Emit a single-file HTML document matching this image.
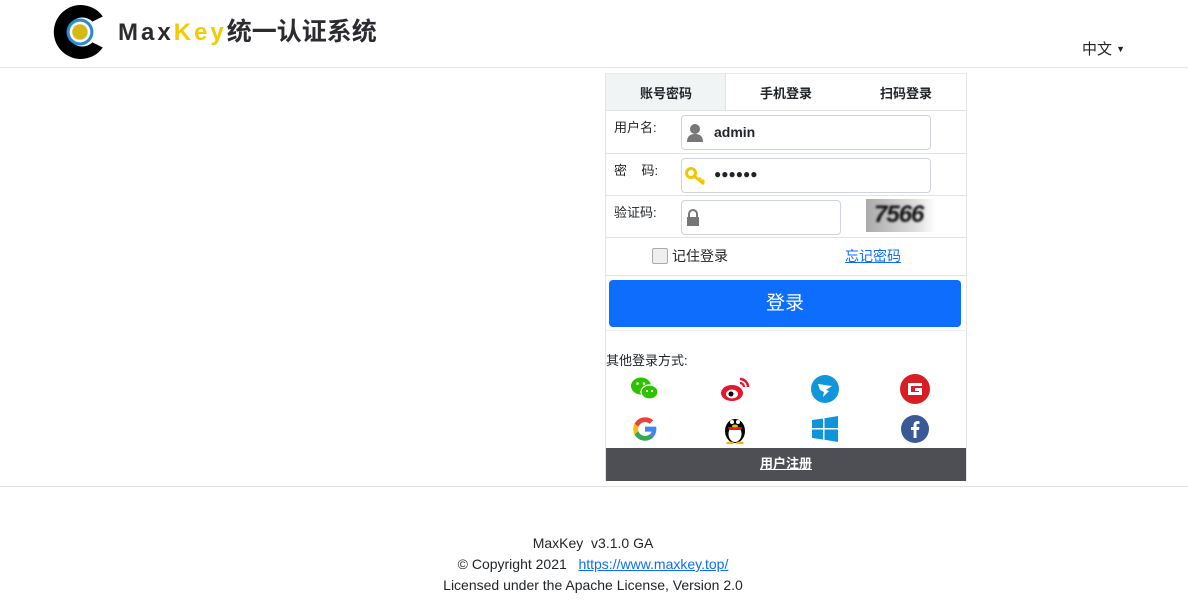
<!DOCTYPE html>
<html><head><meta charset="utf-8"><style>
*{margin:0;padding:0;box-sizing:border-box}
body{width:1188px;height:611px;background:#fff;font-family:"Liberation Sans","Noto Sans CJK SC",sans-serif;color:#212529;position:relative;overflow:hidden;font-size:14px}
.abs{position:absolute}
.hl{position:absolute;left:0;width:1188px;height:1px;background:#e2e2e2}
.panel{position:absolute;left:605px;top:73px;width:362px;height:408px;border:1px solid #e5e5e5;border-top:1px solid #e8e8e8}
.row{position:absolute;left:0;width:360px;border-top:1px solid #e3e3e3}
.lbl{position:absolute;left:8px;font-size:13px}
.inp{position:absolute;left:75px;height:35px;border:1px solid #ced4da;border-radius:4px;background:#fff}
.ic{position:absolute;width:30px;height:30px;display:flex;align-items:center;justify-content:center}
</style></head><body>
<svg class="abs" style="left:53px;top:4px" width="56" height="56" viewBox="0 0 54 54">
<path d="M48 12 A26 26 0 1 0 48 42 L38 37 A14 14 0 1 1 38 17 Z" fill="#000"/>
<circle cx="26" cy="27" r="13" fill="#2a8bd0"/>
<circle cx="26" cy="27" r="10" fill="#fff"/>
<circle cx="26" cy="27" r="7.5" fill="#d6b818"/>
</svg>
<div class="abs" style="left:118px;top:17px;font-size:24px;font-weight:bold;letter-spacing:3px;line-height:30px"><span style="color:#2b2b30">Max</span><span style="color:#f4cb00">Key</span><span style="color:#2b2b30;letter-spacing:0;font-size:25px">统一认证系统</span></div>
<div class="abs" style="left:1082px;top:38px;font-size:15px">中文 <span style="font-size:9px;vertical-align:2px">▼</span></div>
<div class="hl" style="top:67px"></div>
<div class="panel">
 <div class="abs" style="left:0;top:0;width:120px;height:37px;background:#f1f4f5;border-right:1px solid #e3e3e3"></div>
 <div class="abs" style="left:0;top:9px;width:120px;text-align:center;font-size:13px;font-weight:bold">账号密码</div>
 <div class="abs" style="left:120px;top:9px;width:120px;text-align:center;font-size:13px;font-weight:bold">手机登录</div>
 <div class="abs" style="left:240px;top:9px;width:120px;text-align:center;font-size:13px;font-weight:bold">扫码登录</div>
 <div class="row" style="top:36px;height:43px"><span class="lbl" style="top:6px">用户名:</span>
  <div class="inp" style="top:4px;width:250px"><svg class="abs" style="left:4px;top:7px" width="18" height="20" viewBox="0 0 18 20"><circle cx="9" cy="6" r="5" fill="#777"/><path d="M1 19 Q1 11 9 11 Q17 11 17 19Z" fill="#777"/></svg><span class="abs" style="left:32px;top:8px;font-weight:bold;font-size:14px">admin</span></div></div>
 <div class="row" style="top:79px;height:43px"><span class="lbl" style="top:6px">密&nbsp;&nbsp;&nbsp;&nbsp;码:</span>
  <div class="inp" style="top:4px;width:250px"><svg class="abs" style="left:3px;top:7px" width="22" height="20" viewBox="0 0 22 20"><circle cx="6" cy="7" r="4.5" fill="none" stroke="#f2c500" stroke-width="3"/><path d="M9 10 L19 18 M14 14 L16 12 M17 16 L19 14" stroke="#f2c500" stroke-width="3"/></svg><span class="abs" style="left:32px;top:8px;font-weight:bold;font-size:12px;letter-spacing:0">●●●●●●</span></div></div>
 <div class="row" style="top:121px;height:43px"><span class="lbl" style="top:6px">验证码:</span>
  <div class="inp" style="top:4px;width:160px"><svg class="abs" style="left:4px;top:8px" width="14" height="18" viewBox="0 0 14 18"><path d="M3 8 V5 A4 4 0 0 1 11 5 V8" fill="none" stroke="#777" stroke-width="2"/><rect x="1" y="8" width="12" height="9" fill="#777"/></svg></div>
  <div class="abs" style="left:260px;top:3px;width:70px;height:33px;background:linear-gradient(90deg,#aaa,#ddd 70%,#fff);overflow:hidden"><span class="abs" style="left:8px;top:2px;font-family:'Liberation Sans',sans-serif;font-style:italic;font-weight:bold;font-size:24px;color:#111;letter-spacing:-1px;filter:blur(1px)">7566</span></div></div>
 <div class="row" style="top:163px;height:39px">
  <div class="abs" style="left:46px;top:10px;width:16px;height:16px;border:1px solid #aaa;border-radius:2px;background:#eee"></div>
  <span class="abs" style="left:66px;top:8px">记住登录</span>
  <span class="abs" style="left:239px;top:8px;color:#0d6efd;text-decoration:underline">忘记密码</span></div>
 <div class="row" style="top:201px;height:56px"><div class="abs" style="left:3px;top:4px;width:352px;height:47px;background:#0d6efd;border-radius:4px;color:#fff;font-size:19px;text-align:center;line-height:47px">登录</div></div>
 <div class="row" style="top:256px;height:2px;border-color:#f0f0f0"></div>
 <div class="abs" style="left:0;top:276px;font-size:13px">其他登录方式:</div>
 <div class="ic" style="left:24px;top:300px"><svg width="30" height="26" viewBox="0 0 30 26"><ellipse cx="11" cy="10" rx="10" ry="8.5" fill="#2dc100"/><ellipse cx="19.5" cy="16" rx="8.5" ry="7" fill="#2dc100" stroke="#fff" stroke-width="1.2"/><circle cx="7.5" cy="7.5" r="1.3" fill="#fff"/><circle cx="14" cy="7.5" r="1.3" fill="#fff"/><circle cx="17" cy="15" r="1.1" fill="#fff"/><circle cx="22" cy="15" r="1.1" fill="#fff"/></svg></div>
 <div class="ic" style="left:114px;top:300px"><svg width="30" height="26" viewBox="0 0 30 26"><ellipse cx="12" cy="17" rx="11" ry="8" fill="#e6162d"/><ellipse cx="12" cy="18" rx="6" ry="4.5" fill="#fff"/><circle cx="11" cy="18" r="2.5" fill="#000"/><path d="M20 3 A8 8 0 0 1 28 11" stroke="#e6162d" stroke-width="2.5" fill="none"/><path d="M20 7 A4 4 0 0 1 24 11" stroke="#e6162d" stroke-width="2.2" fill="none"/></svg></div>
 <div class="ic" style="left:204px;top:300px"><svg width="28" height="28" viewBox="0 0 28 28"><circle cx="14" cy="14" r="14" fill="#1296db"/><path d="M7 9 L21 11 L15 15 L18 16 L12 22 L13 17 L9 15 Z" fill="#fff"/></svg></div>
 <div class="ic" style="left:294px;top:300px"><svg width="30" height="30" viewBox="0 0 30 30"><circle cx="15" cy="15" r="15" fill="#d81e25"/><path d="M22 9 H8 V21 H22 V14 H15 V17 H19 V18 H11 V12 H22 Z" fill="#fff"/></svg></div>
 <div class="ic" style="left:24px;top:340px"><svg width="28" height="28" viewBox="0 0 48 48"><path d="M43.6 20H24v8.4h11.3C33.7 33 29.3 36 24 36c-6.6 0-12-5.4-12-12s5.4-12 12-12c3 0 5.8 1.1 7.9 3l6-6C34.3 5.7 29.4 4 24 4 13 4 4 13 4 24s9 20 20 20 19.5-8.5 19.5-20c0-1.4-.1-2.7-.4-4z" fill="#4285f4"/><path d="M6.3 14.7l6.9 5C15 15.3 19.1 12 24 12c3 0 5.8 1.1 7.9 3l6-6C34.3 5.7 29.4 4 24 4 16.3 4 9.7 8.3 6.3 14.7z" fill="#ea4335"/><path d="M24 44c5.2 0 9.9-2 13.4-5.2l-6.2-5.2C29.2 35.1 26.7 36 24 36c-5.200 0-9.6-3.3-11.3-8l-6.8 5.3C9.5 39.6 16.2 44 24 44z" fill="#34a853"/><path d="M6 33.3l6.8-5.3c-.5-1.2-.8-2.6-.8-4s.3-2.8.8-4l-6.9-5C4.7 17.5 4 20.7 4 24s.7 6.6 2 9.3z" fill="#fbbc05"/></svg></div>
 <div class="ic" style="left:114px;top:340px"><svg width="26" height="30" viewBox="0 0 26 30"><ellipse cx="13" cy="17" rx="10" ry="12" fill="#000"/><ellipse cx="13" cy="20" rx="6.5" ry="8" fill="#fff"/><circle cx="10" cy="8" r="2" fill="#fff"/><circle cx="16" cy="8" r="2" fill="#fff"/><path d="M6 13 H20 L19 16 H7 Z" fill="#e31b1b"/><ellipse cx="13" cy="12" rx="3" ry="1.5" fill="#f5b800"/><ellipse cx="8" cy="29" rx="4" ry="1.5" fill="#f5b800"/><ellipse cx="18" cy="29" rx="4" ry="1.5" fill="#f5b800"/></svg></div>
 <div class="ic" style="left:204px;top:340px"><svg width="26" height="26" viewBox="0 0 26 26"><path d="M0 4 L11 2.5 V12 H0Z M12.5 2.3 L26 0 V12 H12.5Z M0 13.5 H11 V23.5 L0 22Z M12.5 13.5 H26 V26 L12.5 23.7Z" fill="#0f94dc"/></svg></div>
 <div class="ic" style="left:294px;top:340px"><svg width="28" height="28" viewBox="0 0 28 28"><circle cx="14" cy="14" r="14" fill="#3b5998"/><path d="M15.5 23 V15 H18 L18.4 12 H15.5 V10.3 C15.5 9.4 15.8 8.9 17 8.9 H18.5 V6.3 C18 6.2 17.2 6.1 16.3 6.1 C14 6.1 12.6 7.5 12.6 10 V12 H10 V15 H12.6 V23Z" fill="#fff"/></svg></div>
 <div class="abs" style="left:0;top:374px;width:360px;height:33px;background:#4e4f54;color:#fff;font-weight:bold;font-size:13px;text-align:center;line-height:32px;text-decoration:underline">用户注册</div>
</div>
<div class="hl" style="top:486px"></div>
<div class="abs" style="left:0;top:533px;width:1186px;text-align:center;font-size:14px;line-height:21px">MaxKey&nbsp; v3.1.0 GA<br>© Copyright 2021&nbsp;&nbsp; <span style="color:#0d6efd;text-decoration:underline">https://www.maxkey.top/</span><br>Licensed under the Apache License, Version 2.0</div>
</body></html>
